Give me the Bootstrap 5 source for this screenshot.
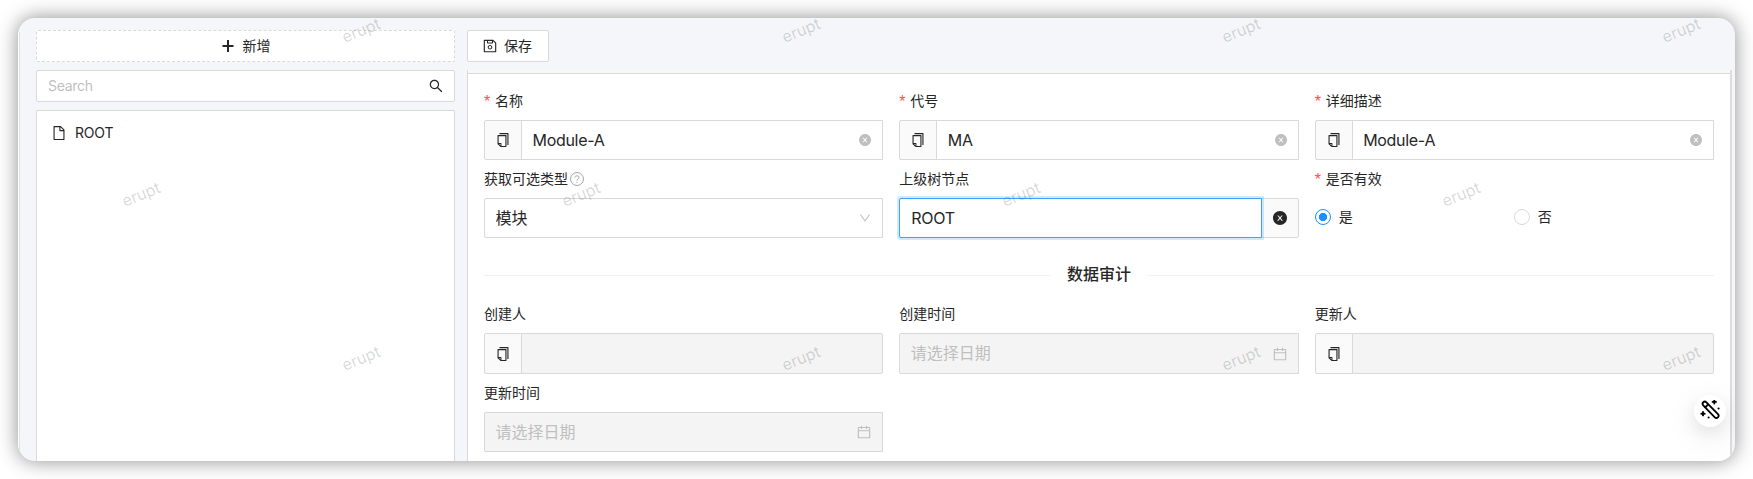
<!DOCTYPE html>
<html lang="zh-CN">
<head>
<meta charset="utf-8">
<meta name="viewport" content="width=device-width, initial-scale=1">
<title>erupt</title>
<link rel="stylesheet" href="https://cdn.jsdelivr.net/npm/bootstrap@5.3.0/dist/css/bootstrap.min.css">
<style>
  :root { --line: #d9d9d9; --ink: #262626; --hint: #bfbfbf; }
  body { font-family: Inter, "Noto Sans CJK SC", sans-serif; font-size: 14px; line-height: 20px; color: var(--ink); background: #fff; height: 479px; padding: 18px; }
  .icon { width: 14px; height: 14px; fill: currentColor; flex: none; display: block; }
  .window { width: 1717px; height: 443px; border-radius: 17px; background: #f5f6fa; box-shadow: 0 0 20px rgba(0,0,0,.45); }
  .window::before { content: ""; width: 2px; flex: none; margin-top: 14px; background: linear-gradient(90deg, #fff 50%, #e3e3e5 50%); }
  .sidebar { width: 419px; margin-left: 16px; padding-top: 12px; }
  .box { background: #fff; border: 1px solid var(--line); border-radius: 2px; }
  .bar { height: 32px; flex: none; }
  .btn-tool { --bs-btn-color: var(--ink); --bs-btn-font-size: 14px; --bs-btn-padding-y: 0; --bs-btn-padding-x: 15px; line-height: 20px; }
  .dashed { border-style: dashed; }
  .plus { margin-right: 8px; }
  .search-icon { margin-right: 3px; }
  .search-field { font-size: 14px; letter-spacing: -.3px; padding: 0 0 1px 11px; }
  .form-control::placeholder { color: var(--hint); opacity: 1; }
  .tree { border-radius: 2px 2px 0 0; border-bottom: 0; padding: 12px 15px; letter-spacing: -.2px; }
  .tree-node { gap: 9px; }
  .main { width: 1268px; margin-left: 12px; padding-top: 12px; }
  .main .btn-tool { width: 82px; gap: 7px; }
  .panel { width: 1265px; min-height: 0; border: solid var(--line); border-width: 0 2px 0 1px; border-right-color: #dcdcdd; background: #fff; }
  .panel-cap { height: 4px; background: #f8f8f8; border-bottom: 1px solid var(--line); }
  .fields { width: 1230px; margin-left: 16px; }
  .grid { display: grid; grid-template-columns: repeat(3, 1fr); column-gap: 16px; }
  .item-label { height: 38px; }
  .req::before { content: "*"; color: #ff4d4f; margin-right: 4px; font-family: "Liberation Sans"; font-size: 16px; width: 7px; padding-top: 2px; }
  .help { margin-left: 2px; color: #a3a3a3; }
  .field { height: 40px; }
  .field.tall { height: 41px; }
  .field .form-control, .field .input-group-text { border-radius: 2px; border-color: var(--line); }
  .field .input-group-text { background: #fafafa; width: 38px; padding: 0; color: var(--ink); }
  .field .form-control { font-size: 16px; letter-spacing: -.3px; color: var(--ink); padding: 0 11px; box-shadow: none; }
  .field .input-group-text + .form-control { padding-left: 10.5px; }
  .field .form-control.cjk { letter-spacing: 0; padding-left: 10.5px; }
  .field .form-control:disabled { background: #f4f4f4; padding-bottom: 1px; }
  .field.is-focus .form-control { border-color: #40a0ff; box-shadow: 0 0 0 2px rgba(24,144,255,.2); z-index: 2; }
  .suffix { right: 12px; z-index: 6; color: var(--hint); }
  .suffix.small-icon { width: 12px; height: 12px; }
  .divider { height: 57px; padding-top: 17px; font-size: 16px; font-weight: 500; gap: 16px; }
  .divider span { padding-bottom: 2px; }
  .divider::before, .divider::after { content: ""; flex: 1; height: 1px; background: #f2f2f2; }
  .form-check-input.dot { width: 16px; height: 16px; margin: 0; border-color: var(--line); background: #fff; box-shadow: none; }
  .form-check-input.dot:checked { border-color: #1890ff; background: radial-gradient(circle, #1890ff 3.8px, #fff 4.4px); }
  .choice { gap: 8px; height: 38px; width: 199px; }
  .mark-layer { inset: 0; z-index: 20; pointer-events: none; }
  .stamp { font: 16px/10px Inter, sans-serif; color: rgba(0,0,0,.16); transform: translate(-50%,-50%) rotate(-22deg); }
  .wand { width: 32px; height: 32px; right: 9px; bottom: 34px; z-index: 21; background: #fff; box-shadow: 0 6px 16px rgba(0,0,0,.08), 0 9px 28px 8px rgba(0,0,0,.04); }
</style>
</head>
<body>
<svg class="d-none" xmlns="http://www.w3.org/2000/svg">
  <symbol id="search" viewBox="64 64 896 896"><path d="M909.6 854.5L649.9 594.8C690.2 542.7 712 479 712 412c0-80.2-31.3-155.4-87.9-212.1-56.6-56.7-132-87.9-212.1-87.9s-155.5 31.3-212.1 87.9C143.2 256.5 112 331.8 112 412c0 80.1 31.3 155.5 87.9 212.1C256.5 680.8 331.8 712 412 712c67 0 130.6-21.8 182.7-62l259.7 259.6a8.2 8.2 0 0011.6 0l43.6-43.5a8.2 8.2 0 000-11.6zM570.4 570.4C528 612.7 471.8 636 412 636s-116-23.3-158.4-65.6C211.3 528 188 471.8 188 412s23.3-116.1 65.6-158.4C296 211.3 352.2 188 412 188s116.1 23.2 158.4 65.6S636 352.2 636 412s-23.3 116.1-65.6 158.4z"/></symbol>
  <symbol id="file" viewBox="64 64 896 896"><path d="M854.6 288.6L639.4 73.4c-6-6-14.1-9.4-22.6-9.4H192c-17.7 0-32 14.3-32 32v832c0 17.7 14.3 32 32 32h640c17.7 0 32-14.3 32-32V311.3c0-8.5-3.4-16.7-9.4-22.7zM790.2 326H602V137.8L790.2 326zm1.8 562H232V136h302v216a42 42 0 0042 42h216v494z"/></symbol>
  <symbol id="save" viewBox="64 64 896 896"><path d="M893.3 293.3L730.7 130.7c-7.5-7.5-16.7-13-26.7-16V112H144c-17.7 0-32 14.3-32 32v736c0 17.7 14.3 32 32 32h736c17.7 0 32-14.3 32-32V338.5c0-17-6.7-33.2-18.7-45.2zM384 184h256v104H384V184zm456 656H184V184h136v136c0 17.7 14.3 32 32 32h320c17.7 0 32-14.3 32-32V205.8l136 136V840zM512 442c-79.5 0-144 64.5-144 144s64.5 144 144 144 144-64.5 144-144-64.5-144-144-144zm0 224c-44.2 0-80-35.8-80-80s35.8-80 80-80 80 35.8 80 80-35.8 80-80 80z"/></symbol>
  <symbol id="copy" viewBox="64 64 896 896"><path d="M832 64H296c-4.4 0-8 3.6-8 8v56c0 4.4 3.6 8 8 8h496v688c0 4.4 3.6 8 8 8h56c4.4 0 8-3.6 8-8V96c0-17.7-14.3-32-32-32zM704 192H192c-17.7 0-32 14.3-32 32v530.7c0 8.5 3.4 16.6 9.4 22.6l173.3 173.3c2.2 2.2 4.7 4 7.4 5.5v1.9h4.2c3.5 1.3 7.2 2 11 2H704c17.7 0 32-14.3 32-32V224c0-17.7-14.3-32-32-32zM350 856.2L263.9 770H350v86.2zM664 888H414V746c0-22.1-17.9-40-40-40H232V264h432v624z"/></symbol>
  <symbol id="clear" viewBox="64 64 896 896"><path d="M512 64C264.6 64 64 264.6 64 512s200.6 448 448 448 448-200.6 448-448S759.4 64 512 64zm165.4 618.2l-66-.3L512 563.4l-99.3 118.4-66.1.3c-4.4 0-8-3.5-8-8 0-1.9.7-3.7 1.9-5.2l130.1-155L340.5 359a8.32 8.32 0 01-1.9-5.2c0-4.4 3.6-8 8-8l66.1.3L512 464.6l99.3-118.4 66-.3c4.4 0 8 3.5 8 8 0 1.9-.7 3.7-1.9 5.2L553.5 514l130 155c1.2 1.5 1.9 3.3 1.9 5.2 0 4.4-3.6 8-8 8z"/></symbol>
  <symbol id="calendar" viewBox="64 64 896 896"><path d="M880 184H712v-64c0-4.4-3.6-8-8-8h-56c-4.4 0-8 3.6-8 8v64H384v-64c0-4.4-3.6-8-8-8h-56c-4.4 0-8 3.6-8 8v64H144c-17.7 0-32 14.3-32 32v664c0 17.7 14.3 32 32 32h736c17.7 0 32-14.3 32-32V216c0-17.7-14.3-32-32-32zm-40 656H184V460h656v380zM184 392V256h128v48c0 4.4 3.6 8 8 8h56c4.4 0 8-3.6 8-8v-48h256v48c0 4.4 3.6 8 8 8h56c4.4 0 8-3.6 8-8v-48h128v136H184z"/></symbol>
  <symbol id="down" viewBox="64 64 896 896"><path d="M884 256h-75c-5.1 0-9.9 2.5-12.9 6.6L512 654.2 227.9 262.6c-3-4.1-7.8-6.6-12.9-6.6h-75c-6.5 0-10.3 7.4-6.5 12.7l352.6 486.1c12.8 17.6 39 17.6 51.7 0l352.6-486.1c3.9-5.3.1-12.7-6.4-12.7z"/></symbol>
  <symbol id="help" viewBox="0 0 14 14"><circle cx="7" cy="7" r="6.45" fill="none" stroke="currentColor" stroke-width="1"/><path d="M5 5.5C5 3.3 9 3.3 9 5.5 9 6.9 7 6.8 7 8.6" fill="none" stroke="currentColor" stroke-width="1"/><circle cx="7" cy="10.3" r=".65"/></symbol>
</svg>

<div class="window d-flex position-relative overflow-hidden">
  <aside class="sidebar d-flex flex-column gap-2">
    <button type="button" class="btn btn-tool box bar dashed d-flex align-items-center justify-content-center">
      <svg class="icon plus" viewBox="0 0 14 14"><path d="M6 1h2v5h4.500v2H8v5H6V8H1.500V6H6z"/></svg>新增
    </button>
    <div class="box bar d-flex align-items-center pe-2">
      <input class="form-control border-0 shadow-none bg-transparent search-field" placeholder="Search">
      <svg class="icon search-icon"><use href="#search"/></svg>
    </div>
    <div class="box tree flex-grow-1">
      <div class="tree-node d-flex align-items-center"><svg class="icon"><use href="#file"/></svg><span>ROOT</span></div>
    </div>
  </aside>

  <main class="main d-flex flex-column gap-2">
    <button type="button" class="btn btn-tool box bar d-flex align-items-center"><svg class="icon"><use href="#save"/></svg>保存</button>
    <section class="panel flex-grow-1">
      <div class="panel-cap"></div>
      <form class="fields">
        <div class="grid pt-2">
          <div>
            <div class="item-label d-flex align-items-center req">名称</div>
            <div class="field input-group position-relative"><span class="input-group-text justify-content-center"><svg class="icon"><use href="#copy"/></svg></span><input class="form-control" value="Module-A"><svg class="icon suffix small-icon position-absolute top-50 translate-middle-y"><use href="#clear"/></svg></div>
          </div>
          <div>
            <div class="item-label d-flex align-items-center req">代号</div>
            <div class="field input-group position-relative"><span class="input-group-text justify-content-center"><svg class="icon"><use href="#copy"/></svg></span><input class="form-control" value="MA"><svg class="icon suffix small-icon position-absolute top-50 translate-middle-y"><use href="#clear"/></svg></div>
          </div>
          <div>
            <div class="item-label d-flex align-items-center req">详细描述</div>
            <div class="field input-group position-relative"><span class="input-group-text justify-content-center"><svg class="icon"><use href="#copy"/></svg></span><input class="form-control" value="Module-A"><svg class="icon suffix small-icon position-absolute top-50 translate-middle-y"><use href="#clear"/></svg></div>
          </div>
          <div>
            <div class="item-label d-flex align-items-center">获取可选类型<svg class="icon help"><use href="#help"/></svg></div>
            <div class="field input-group position-relative"><input class="form-control cjk" value="模块" readonly><svg class="icon suffix small-icon position-absolute top-50 translate-middle-y"><use href="#down"/></svg></div>
          </div>
          <div>
            <div class="item-label d-flex align-items-center">上级树节点</div>
            <div class="field input-group is-focus"><input class="form-control" value="ROOT"><span class="input-group-text justify-content-center"><svg class="icon"><use href="#clear"/></svg></span></div>
          </div>
          <div>
            <div class="item-label d-flex align-items-center req">是否有效</div>
            <div class="d-flex">
              <label class="choice d-flex align-items-center"><input class="form-check-input dot" type="radio" name="valid" checked>是</label>
              <label class="choice d-flex align-items-center"><input class="form-check-input dot" type="radio" name="valid">否</label>
            </div>
          </div>
        </div>
        <div class="divider d-flex align-items-center"><span>数据审计</span></div>
        <div class="grid">
          <div>
            <div class="item-label d-flex align-items-center">创建人</div>
            <div class="field tall input-group"><span class="input-group-text justify-content-center"><svg class="icon"><use href="#copy"/></svg></span><input class="form-control" disabled></div>
          </div>
          <div>
            <div class="item-label d-flex align-items-center">创建时间</div>
            <div class="field tall input-group position-relative"><input class="form-control cjk" placeholder="请选择日期" disabled><svg class="icon suffix position-absolute top-50 translate-middle-y"><use href="#calendar"/></svg></div>
          </div>
          <div>
            <div class="item-label d-flex align-items-center">更新人</div>
            <div class="field tall input-group"><span class="input-group-text justify-content-center"><svg class="icon"><use href="#copy"/></svg></span><input class="form-control" disabled></div>
          </div>
          <div>
            <div class="item-label d-flex align-items-center">更新时间</div>
            <div class="field input-group position-relative"><input class="form-control cjk" placeholder="请选择日期" disabled><svg class="icon suffix position-absolute top-50 translate-middle-y"><use href="#calendar"/></svg></div>
          </div>
        </div>
      </form>
    </section>
  </main>

  <div class="mark-layer position-absolute" id="stamps"></div>
  <div class="wand position-absolute rounded-circle d-flex align-items-center justify-content-center">
    <svg width="22" height="22" viewBox="0 0 22 22" fill="none" stroke="#000" stroke-width="1.8" stroke-linecap="round" stroke-linejoin="round"><g transform="translate(11.600 9.800) rotate(46)"><rect x="-10.500" y="-2.200" width="21" height="4.400" rx="2.200"/><path d="M-5.500-2v4"/></g><path d="M15.300 .2v3.400M13.600 1.900h3.400M4 12v3.400M2.300 13.700h3.400" stroke-width="1.9"/><path d="M19.600 8.500h.01M9.600 17.500h.01" stroke-width="2.100"/></svg>
  </div>
</div>
<script src="https://cdn.jsdelivr.net/npm/bootstrap@5.3.0/dist/js/bootstrap.bundle.min.js"></script>
<script>
  // Watermark: staggered rows, 440px apart horizontally and 164px vertically
  const layer = document.getElementById('stamps');
  for (let row = 0; row < 3; row++) {
    for (let col = 0; col < 4; col++) {
      const s = document.createElement('span');
      s.className = 'stamp position-absolute';
      s.textContent = 'erupt';
      s.style.left = (row % 2 ? 123 : 343) + col * 440 + 'px';
      s.style.top = 12 + row * 164 + 'px';
      layer.appendChild(s);
    }
  }
</script>
</body>
</html>
